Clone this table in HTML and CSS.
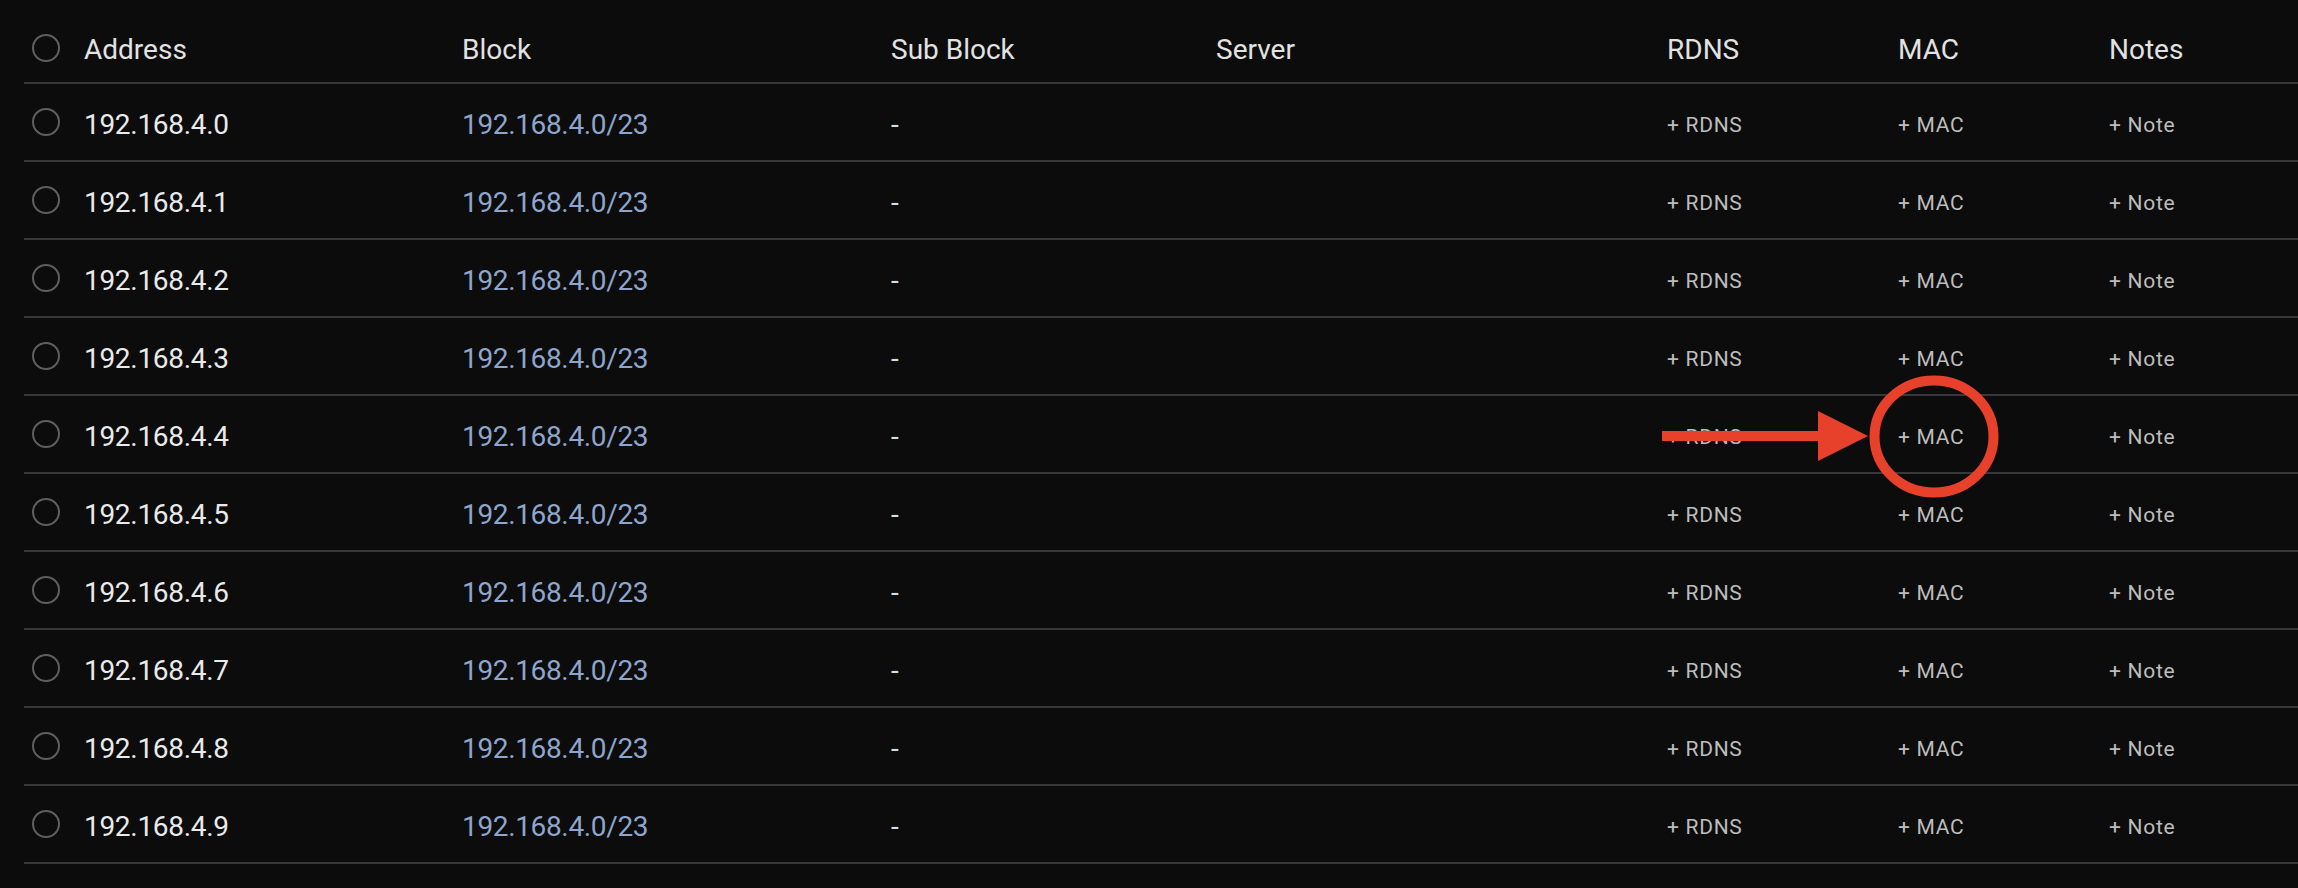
FILE: index.html
```html
<!DOCTYPE html>
<html lang="en">
<head>
<meta charset="utf-8">
<title>IP Addresses</title>
<link rel="stylesheet" href="styles.css">
</head>
<body>
<div class="page">
  <div class="table">
    <div class="row head">
      <span class="radio"></span>
      <span class="cell">Address</span>
      <span class="cell">Block</span>
      <span class="cell">Sub Block</span>
      <span class="cell">Server</span>
      <span class="cell">RDNS</span>
      <span class="cell">MAC</span>
      <span class="cell">Notes</span>
    </div>
    <div class="row"><span class="radio"></span><span class="cell addr">192.168.4.0</span><a class="cell link">192.168.4.0/23</a><span class="cell dash">-</span><span class="cell"></span><span class="cell add">+ RDNS</span><span class="cell add">+ MAC</span><span class="cell add">+ Note</span></div>
    <div class="row"><span class="radio"></span><span class="cell addr">192.168.4.1</span><a class="cell link">192.168.4.0/23</a><span class="cell dash">-</span><span class="cell"></span><span class="cell add">+ RDNS</span><span class="cell add">+ MAC</span><span class="cell add">+ Note</span></div>
    <div class="row"><span class="radio"></span><span class="cell addr">192.168.4.2</span><a class="cell link">192.168.4.0/23</a><span class="cell dash">-</span><span class="cell"></span><span class="cell add">+ RDNS</span><span class="cell add">+ MAC</span><span class="cell add">+ Note</span></div>
    <div class="row"><span class="radio"></span><span class="cell addr">192.168.4.3</span><a class="cell link">192.168.4.0/23</a><span class="cell dash">-</span><span class="cell"></span><span class="cell add">+ RDNS</span><span class="cell add">+ MAC</span><span class="cell add">+ Note</span></div>
    <div class="row"><span class="radio"></span><span class="cell addr">192.168.4.4</span><a class="cell link">192.168.4.0/23</a><span class="cell dash">-</span><span class="cell"></span><span class="cell add">+ RDNS</span><span class="cell add">+ MAC</span><span class="cell add">+ Note</span></div>
    <div class="row"><span class="radio"></span><span class="cell addr">192.168.4.5</span><a class="cell link">192.168.4.0/23</a><span class="cell dash">-</span><span class="cell"></span><span class="cell add">+ RDNS</span><span class="cell add">+ MAC</span><span class="cell add">+ Note</span></div>
    <div class="row"><span class="radio"></span><span class="cell addr">192.168.4.6</span><a class="cell link">192.168.4.0/23</a><span class="cell dash">-</span><span class="cell"></span><span class="cell add">+ RDNS</span><span class="cell add">+ MAC</span><span class="cell add">+ Note</span></div>
    <div class="row"><span class="radio"></span><span class="cell addr">192.168.4.7</span><a class="cell link">192.168.4.0/23</a><span class="cell dash">-</span><span class="cell"></span><span class="cell add">+ RDNS</span><span class="cell add">+ MAC</span><span class="cell add">+ Note</span></div>
    <div class="row"><span class="radio"></span><span class="cell addr">192.168.4.8</span><a class="cell link">192.168.4.0/23</a><span class="cell dash">-</span><span class="cell"></span><span class="cell add">+ RDNS</span><span class="cell add">+ MAC</span><span class="cell add">+ Note</span></div>
    <div class="row"><span class="radio"></span><span class="cell addr">192.168.4.9</span><a class="cell link">192.168.4.0/23</a><span class="cell dash">-</span><span class="cell"></span><span class="cell add">+ RDNS</span><span class="cell add">+ MAC</span><span class="cell add">+ Note</span></div>
  </div>
  <svg class="annotation" viewBox="0 0 2298 888" width="2298" height="888" aria-hidden="true">
    <rect x="1662" y="431" width="160" height="10" fill="#e8412b"/>
    <polygon points="1818,411 1868,436 1818,461" fill="#e8412b"/>
    <ellipse cx="1934" cy="436.5" rx="59.5" ry="56" fill="none" stroke="#e8412b" stroke-width="10"/>
  </svg>
</div>
</body>
</html>
```

FILE: styles.css
```css
html, body {
  margin: 0;
  padding: 0;
  background: #0c0c0c;
}

body {
  font-family: Roboto, "Liberation Sans", Arial, sans-serif;
  color: #e6e6e6;
  width: 2298px;
  height: 888px;
  overflow: hidden;
}

.page {
  position: relative;
  width: 2298px;
  height: 888px;
}

.table {
  margin-left: 24px;
  display: flex;
  flex-direction: column;
}

.row {
  display: grid;
  grid-template-columns: 52px 378px 429px 325px 451px 231px 211px 1fr;
  align-items: center;
  padding-left: 8px;
  height: 76px;
  border-bottom: 2px solid #38383b;
}

.row.head {
  height: 84px;
  box-sizing: border-box;
  padding-top: 14px;
}

.radio {
  width: 28px;
  height: 28px;
  box-sizing: border-box;
  border: 2px solid #5f5f5f;
  border-radius: 50%;
}

.cell {
  font-size: 28px;
  line-height: 1;
  padding-top: 5px;
  white-space: nowrap;
  color: #e4e4e4;
}

.head .cell {
  color: #e2e2e2;
  padding-top: 3px;
}

.addr {
  color: #eaeaea;
  letter-spacing: -0.3px;
}

.link {
  color: #8ea6cd;
  text-decoration: none;
  letter-spacing: -0.35px;
}

.dash {
  color: #dcdcdc;
}

.add {
  font-size: 21px;
  color: #bdbdbd;
  letter-spacing: 0.7px;
  padding-top: 6px;
}

.annotation {
  position: absolute;
  left: 0;
  top: 0;
  pointer-events: none;
}
```
